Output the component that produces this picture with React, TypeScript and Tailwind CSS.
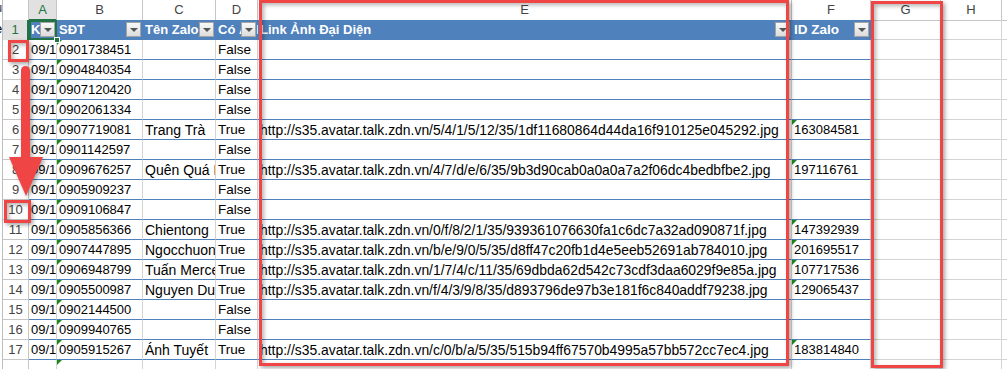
import React from 'react';

type Row = {
    n: number;
    phone: string;
    name: string;
    has: string;
    link: string;
    id: string;
};

const rows: Row[] = [
    { n: 2, phone: '0901738451', name: '', has: 'False', link: '', id: '' },
    { n: 3, phone: '0904840354', name: '', has: 'False', link: '', id: '' },
    { n: 4, phone: '0907120420', name: '', has: 'False', link: '', id: '' },
    { n: 5, phone: '0902061334', name: '', has: 'False', link: '', id: '' },
    { n: 6, phone: '0907719081', name: 'Trang Trà', has: 'True', link: 'http://s35.avatar.talk.zdn.vn/5/4/1/5/12/35/1df11680864d44da16f910125e045292.jpg', id: '163084581' },
    { n: 7, phone: '0901142597', name: '', has: 'False', link: '', id: '' },
    { n: 8, phone: '0909676257', name: 'Quên Quá Khứ', has: 'True', link: 'http://s35.avatar.talk.zdn.vn/4/7/d/e/6/35/9b3d90cab0a0a0a7a2f06dc4bedbfbe2.jpg', id: '197116761' },
    { n: 9, phone: '0905909237', name: '', has: 'False', link: '', id: '' },
    { n: 10, phone: '0909106847', name: '', has: 'False', link: '', id: '' },
    { n: 11, phone: '0905856366', name: 'Chientong', has: 'True', link: 'http://s35.avatar.talk.zdn.vn/0/f/8/2/1/35/939361076630fa1c6dc7a32ad090871f.jpg', id: '147392939' },
    { n: 12, phone: '0907447895', name: 'Ngocchuong', has: 'True', link: 'http://s35.avatar.talk.zdn.vn/b/e/9/0/5/35/d8ff47c20fb1d4e5eeb52691ab784010.jpg', id: '201695517' },
    { n: 13, phone: '0906948799', name: 'Tuấn Mercedes', has: 'True', link: 'http://s35.avatar.talk.zdn.vn/1/7/4/c/11/35/69dbda62d542c73cdf3daa6029f9e85a.jpg', id: '107717536' },
    { n: 14, phone: '0905500987', name: 'Nguyen Duc', has: 'True', link: 'http://s35.avatar.talk.zdn.vn/f/4/3/9/8/35/d893796de97b3e181f6c840addf79238.jpg', id: '129065437' },
    { n: 15, phone: '0902144500', name: '', has: 'False', link: '', id: '' },
    { n: 16, phone: '0909940765', name: '', has: 'False', link: '', id: '' },
    { n: 17, phone: '0905915267', name: 'Ánh Tuyết', has: 'True', link: 'http://s35.avatar.talk.zdn.vn/c/0/b/a/5/35/515b94ff67570b4995a57bb572cc7ec4.jpg', id: '183814840' },
];

const gridCols = 'grid grid-cols-[3px_26px_28px_86px_73px_42px_534px_79px_70px_61px_1fr]';

function Tri() {
    return <span className="absolute left-0 top-0 w-0 h-0 border-t-[5px] border-r-[5px] border-t-[#1b8a1b] border-r-transparent" />;
}

function Drop() {
    return (
        <span className="absolute right-[2px] top-[2px] w-[15px] h-[15px] flex items-center justify-center border border-[#a4a4a4] bg-gradient-to-b from-[#f8f8f8] to-[#dcdcdc]">
            <span className="w-0 h-0 border-l-[4px] border-r-[4px] border-t-[4px] border-l-transparent border-r-transparent border-t-[#555]" />
        </span>
    );
}

function Cell({ children, tri, cls = '' }: { children?: React.ReactNode; tri?: boolean; cls?: string }) {
    return (
        <div className={`relative h-[20px] border-r border-b border-r-[#d4d4d4] border-b-[#4f81bd] px-[2px] leading-[20px] whitespace-nowrap overflow-hidden ${cls}`}>
            {tri && <Tri />}
            {children}
        </div>
    );
}

function Grey() {
    return <div className="h-[20px] border-r border-b border-[#d4d4d4]" />;
}

function HeadCell({ label, cls = '' }: { label: string; cls?: string }) {
    return (
        <div className={`relative h-[20px] bg-[#4f81bd] text-white font-bold px-[2px] leading-[20px] whitespace-nowrap overflow-hidden ${cls}`}>
            {label}
            <Drop />
        </div>
    );
}

function RedBox({ cls }: { cls: string }) {
    return (
        <div className={`absolute border-[3px] border-[#ef4545] shadow-[2px_2px_4px_rgba(0,0,0,0.35),inset_2px_2px_4px_rgba(0,0,0,0.3)] ${cls}`} />
    );
}

export default function App() {
    const letters = ['B', 'C', 'D', 'E', 'F', 'G', 'H'];
    return (
        <div className="relative w-[1007px] h-[369px] overflow-hidden bg-white text-[13px] text-black font-['Liberation_Sans',Arial,sans-serif]">
            {/* column letters */}
            <div className={`${gridCols} h-[20px] text-[#444]`}>
                <div className="border-r border-[#bdbdbd] overflow-hidden whitespace-nowrap leading-[16px]">
                    <span className="-ml-[5px]">u</span>
                </div>
                <div className="border-r border-b border-[#c6c6c6]" />
                <div className="text-center leading-[19px] bg-[#e1e1e1] text-[#217346] border-r border-[#c6c6c6] border-b-2 border-b-[#217346]">A</div>
                {letters.map((l) => (
                    <div key={l} className="text-center leading-[19px] border-r border-b border-[#c6c6c6]">{l}</div>
                ))}
                <div className="border-b border-[#c6c6c6]" />
            </div>

            {/* table header row */}
            <div className={gridCols}>
                <div className="border-r border-[#bdbdbd] overflow-hidden whitespace-nowrap leading-[18px]">
                    <span className="-ml-[5px]">e</span>
                </div>
                <div className="h-[20px] text-center leading-[20px] bg-[#e1e1e1] text-[#217346] border-r-2 border-[#217346]">1</div>
                <div className="relative h-[20px] bg-[#4f81bd] text-white font-bold px-[2px] leading-[20px] whitespace-nowrap overflow-hidden outline-2 outline-[#217346] -outline-offset-2">
                    K
                    <Drop />
                </div>
                <HeadCell label="SĐT" />
                <HeadCell label="Tên Zalo" />
                <HeadCell label="Có Ảnh" />
                <HeadCell label="Link Ảnh Đại Diện" />
                <HeadCell label="ID Zalo" cls="text-[13.5px]" />
                <Grey />
                <Grey />
                <div className="h-[20px] border-b border-[#d4d4d4]" />
            </div>

            {rows.map((r) => (
                <div key={r.n} className={gridCols}>
                    <div className="border-r border-[#bdbdbd]" />
                    <div className="h-[20px] text-center leading-[20px] text-[#444] border-r border-b border-[#c6c6c6]">{r.n}</div>
                    <Cell>09/1</Cell>
                    <Cell tri>{r.phone}</Cell>
                    <Cell cls="text-[14px]">{r.name}</Cell>
                    <Cell cls="text-[13.5px]">{r.has}</Cell>
                    <Cell cls="text-[13.9px]">{r.link}</Cell>
                    <Cell tri={!!r.id}>{r.id}</Cell>
                    <Grey />
                    <Grey />
                    <div className="h-[20px] border-b border-[#d4d4d4]" />
                </div>
            ))}

            <div className={gridCols}>
                <div className="border-r border-[#bdbdbd]" />
                <div className="h-[20px] border-r border-[#c6c6c6]" />
                <Cell />
                <Cell tri />
                <Cell />
                <Cell />
                <Cell />
                <Cell />
                <Grey />
                <Grey />
                <div />
            </div>

            {/* fill handle of the active cell */}
            <div className="absolute left-[54px] top-[37px] w-[6px] h-[6px] bg-[#217346] border border-white" />

            {/* annotations */}
            <RedBox cls="left-[259px] top-0 w-[530px] h-[366px]" />
            <RedBox cls="left-[871px] top-[1px] w-[72px] h-[367px]" />
            <RedBox cls="left-[8px] top-[40px] w-[21px] h-[22px]" />
            <RedBox cls="left-[4px] top-[200px] w-[27px] h-[23px]" />
            <svg className="absolute left-0 top-[60px] drop-shadow-[2px_2px_2px_rgba(0,0,0,0.35)]" width="50" height="145" viewBox="0 60 50 145">
                <rect x="21" y="66" width="9" height="96" rx="4.5" fill="#ef4545" />
                <polygon points="9,157 43,157 26,196" fill="#ef4545" />
            </svg>
        </div>
    );
}
